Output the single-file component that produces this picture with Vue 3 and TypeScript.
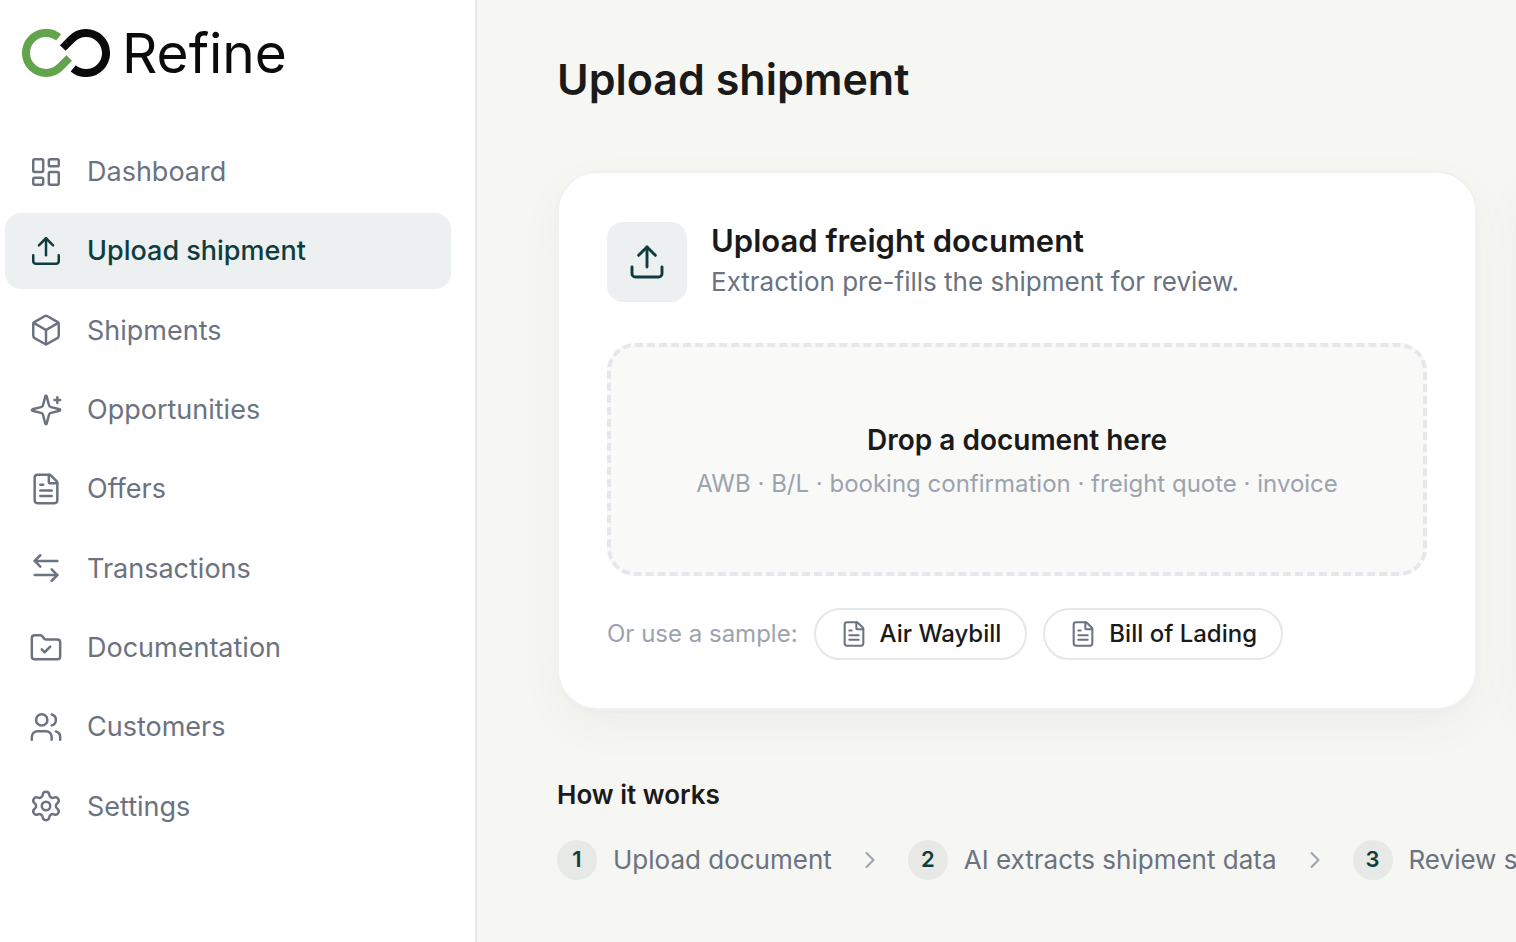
<script setup lang="ts">
import { ref } from 'vue'

interface NavItem {
  label: string
  icon: string[]
}

const UPLOAD = ['M12 3v12', 'm17 8-5-5-5 5', 'M21 15v4a2 2 0 0 1-2 2H5a2 2 0 0 1-2-2v-4']
const FILE = [
  'M6 22a2 2 0 0 1-2-2V4a2 2 0 0 1 2-2h8a2.4 2.4 0 0 1 1.704.706l3.588 3.588A2.4 2.4 0 0 1 20 8v12a2 2 0 0 1-2 2z',
  'M14 2v5a1 1 0 0 0 1 1h5',
  'M10 9H8',
  'M16 13H8',
  'M16 17H8',
]
const CHEVRON = 'm9 18 6-6-6-6'

const navItems: NavItem[] = [
  {
    label: 'Dashboard',
    icon: [
      'M4 3h5a1 1 0 0 1 1 1v7a1 1 0 0 1-1 1H4a1 1 0 0 1-1-1V4a1 1 0 0 1 1-1z',
      'M15 3h5a1 1 0 0 1 1 1v3a1 1 0 0 1-1 1h-5a1 1 0 0 1-1-1V4a1 1 0 0 1 1-1z',
      'M15 12h5a1 1 0 0 1 1 1v7a1 1 0 0 1-1 1h-5a1 1 0 0 1-1-1v-7a1 1 0 0 1 1-1z',
      'M4 16h5a1 1 0 0 1 1 1v3a1 1 0 0 1-1 1H4a1 1 0 0 1-1-1v-3a1 1 0 0 1 1-1z',
    ],
  },
  { label: 'Upload shipment', icon: UPLOAD },
  {
    label: 'Shipments',
    icon: [
      'M21 8a2 2 0 0 0-1-1.73l-7-4a2 2 0 0 0-2 0l-7 4A2 2 0 0 0 3 8v8a2 2 0 0 0 1 1.73l7 4a2 2 0 0 0 2 0l7-4A2 2 0 0 0 21 16Z',
      'm3.3 7 8.7 5 8.7-5',
      'M12 22V12',
    ],
  },
  {
    label: 'Opportunities',
    icon: [
      'M9.937 15.5A2 2 0 0 0 8.5 14.063l-6.135-1.582a.5.5 0 0 1 0-.962L8.5 9.936A2 2 0 0 0 9.937 8.5l1.582-6.135a.5.5 0 0 1 .963 0L14.063 8.5A2 2 0 0 0 15.5 9.937l6.135 1.581a.5.5 0 0 1 0 .964L15.5 14.063a2 2 0 0 0-1.437 1.437l-1.582 6.135a.5.5 0 0 1-.963 0z',
      'M20 3v4',
      'M22 5h-4',
    ],
  },
  { label: 'Offers', icon: FILE },
  {
    label: 'Transactions',
    icon: ['M8 3 4 7l4 4', 'M4 7h16', 'm16 21 4-4-4-4', 'M20 17H4'],
  },
  {
    label: 'Documentation',
    icon: [
      'M20 20a2 2 0 0 0 2-2V8a2 2 0 0 0-2-2h-7.9a2 2 0 0 1-1.69-.9L9.6 3.9A2 2 0 0 0 7.93 3H4a2 2 0 0 0-2 2v13a2 2 0 0 0 2 2Z',
      'm9 13 2 2 4-4',
    ],
  },
  {
    label: 'Customers',
    icon: [
      'M16 21v-2a4 4 0 0 0-4-4H6a4 4 0 0 0-4 4v2',
      'M5 7a4 4 0 1 0 8 0a4 4 0 1 0-8 0',
      'M22 21v-2a4 4 0 0 0-3-3.87',
      'M16 3.128a4 4 0 0 1 0 7.744',
    ],
  },
  {
    label: 'Settings',
    icon: [
      'M9.671 4.136a2.34 2.34 0 0 1 4.659 0 2.34 2.34 0 0 0 3.319 1.915 2.34 2.34 0 0 1 2.33 4.033 2.34 2.34 0 0 0 0 3.831 2.34 2.34 0 0 1-2.33 4.033 2.34 2.34 0 0 0-3.319 1.915 2.34 2.34 0 0 1-4.659 0 2.34 2.34 0 0 0-3.32-1.915 2.34 2.34 0 0 1-2.33-4.033 2.34 2.34 0 0 0 0-3.831A2.34 2.34 0 0 1 6.35 6.051a2.34 2.34 0 0 0 3.319-1.915',
      'M9 12a3 3 0 1 0 6 0a3 3 0 1 0-6 0',
    ],
  },
]

const active = ref('Upload shipment')
const samples: string[] = ['Air Waybill', 'Bill of Lading']
const steps: string[] = ['Upload document', 'AI extracts shipment data', 'Review shipment']
</script>

<template>
  <div class="app">
    <aside class="sidebar">
      <a class="brand" href="#" aria-label="Refine home">
        <svg class="brand-mark" viewBox="22 29 88 48" fill="none" stroke-width="8" aria-hidden="true">
          <path d="M58.6 37.4A20 20 0 1 0 60.1 67.1L69.2 58" stroke="#63a34b" />
          <path d="M62.8 48L71.9 38.9A20 20 0 1 1 73.2 68.4" stroke="#0b0b0b" />
        </svg>
        <span class="brand-name">Refine</span>
      </a>
      <nav class="nav" aria-label="Main">
        <a
          v-for="item in navItems"
          :key="item.label"
          href="#"
          class="nav-item"
          :class="{ active: item.label === active }"
          :aria-current="item.label === active ? 'page' : undefined"
          @click.prevent="active = item.label"
        >
          <svg class="icon nav-icon" viewBox="0 0 24 24" aria-hidden="true">
            <path v-for="d in item.icon" :key="d" :d="d" />
          </svg>
          <span>{{ item.label }}</span>
        </a>
      </nav>
    </aside>

    <main class="main">
      <h1 class="title">Upload shipment</h1>

      <div class="cards">
        <section class="card">
          <header class="card-head">
            <span class="card-badge">
              <svg class="icon badge-icon" viewBox="0 0 24 24" aria-hidden="true">
                <path v-for="d in UPLOAD" :key="d" :d="d" />
              </svg>
            </span>
            <div class="card-text">
              <h2 class="card-title">Upload freight document</h2>
              <p class="card-sub">Extraction pre-fills the shipment for review.</p>
            </div>
          </header>

          <button type="button" class="dropzone">
            <span class="drop-title">Drop a document here</span>
            <span class="drop-sub">AWB · B/L · booking confirmation · freight quote · invoice</span>
          </button>

          <div class="samples">
            <span class="samples-label">Or use a sample:</span>
            <button v-for="sample in samples" :key="sample" type="button" class="chip">
              <svg class="icon chip-icon" viewBox="0 0 24 24" aria-hidden="true">
                <path v-for="d in FILE" :key="d" :d="d" />
              </svg>
              <span class="chip-label">{{ sample }}</span>
            </button>
          </div>
        </section>
        <section class="card" aria-hidden="true"></section>
      </div>

      <section class="how">
        <h2 class="how-title">How it works</h2>
        <ol class="steps">
          <li v-for="(step, i) in steps" :key="step" class="step">
            <svg v-if="i > 0" class="icon step-arrow" viewBox="0 0 24 24" aria-hidden="true">
              <path :d="CHEVRON" />
            </svg>
            <span class="step-number">{{ i + 1 }}</span>
            <span class="step-label">{{ step }}</span>
          </li>
        </ol>
      </section>
    </main>
  </div>
</template>

<style>
body {
  margin: 0;
  overflow: hidden;
}
</style>

<style scoped>
.app {
  display: flex;
  min-height: 100vh;
  background: #f6f6f2;
  color: #1a1a1a;
  font-family: Inter, "Liberation Sans", sans-serif;
}

.icon {
  flex: none;
  fill: none;
  stroke: currentColor;
  stroke-width: 1.75;
  stroke-linecap: round;
  stroke-linejoin: round;
}

h1,
h2,
p,
ol {
  margin: 0;
  padding: 0;
}

.sidebar {
  box-sizing: border-box;
  flex: none;
  width: 477px;
  padding: 20px 24px 0 5px;
  background: #fff;
  border-right: 2px solid #e5e7eb;
}

.brand {
  display: flex;
  align-items: center;
  gap: 12px;
  height: 66px;
  padding-left: 17px;
  color: #0b0b0b;
  text-decoration: none;
}

.brand-mark {
  width: 88px;
  height: 48px;
}

.brand-name {
  font-size: 55px;
  font-weight: 400;
  line-height: 66px;
}

.nav {
  display: grid;
  grid-auto-rows: 1fr;
  gap: 4px;
  height: 710px;
  margin-top: 48px;
}

.nav-item {
  display: flex;
  align-items: center;
  gap: 24px;
  padding: 0 24px;
  border-radius: 16px;
  color: #6b7280;
  font-size: 27px;
  text-decoration: none;
}

.nav-item.active {
  background: #ecf0f1;
  color: #0f3d3e;
  font-weight: 500;
}

.nav-icon {
  width: 34px;
  height: 34px;
}

.main {
  flex: 1;
  min-width: 0;
  padding: 51px 0 0 80px;
  overflow: hidden;
}

.title {
  font-size: 43px;
  font-weight: 600;
  line-height: 56px;
}

.cards {
  display: grid;
  grid-template-columns: repeat(2, calc(100% - 39px));
  gap: 40px;
  margin-top: 64px;
}

.card {
  box-sizing: border-box;
  padding: 48px;
  background: #fff;
  border: 2px solid #f1f1f2;
  border-radius: 40px;
  box-shadow: 0 2px 4px rgba(16, 24, 40, 0.02), 0 16px 48px rgba(16, 24, 40, 0.04);
}

.card-head {
  display: flex;
  align-items: center;
  gap: 24px;
  height: 82px;
}

.card-badge {
  display: grid;
  place-items: center;
  width: 80px;
  height: 80px;
  border-radius: 16px;
  background: #ecf0f1;
  color: #0f3d3e;
}

.badge-icon {
  width: 40px;
  height: 40px;
}

.card-text {
  padding-bottom: 2px;
}

.card-title {
  font-size: 31px;
  font-weight: 600;
  line-height: 42px;
}

.card-sub {
  color: #6b7280;
  font-size: 26px;
  line-height: 40px;
}

.dropzone {
  display: flex;
  flex-direction: column;
  align-items: center;
  justify-content: center;
  box-sizing: border-box;
  width: 100%;
  height: 233px;
  margin-top: 40px;
  padding: 4px 0 0;
  border: 4px dashed #e5e7eb;
  border-radius: 28px;
  background: #f9f9f8;
  font-family: inherit;
}

.drop-title {
  color: #1a1a1a;
  font-size: 28px;
  font-weight: 600;
  line-height: 44px;
}

.drop-sub {
  color: #9ca3af;
  font-size: 24px;
  line-height: 44px;
}

.samples {
  display: flex;
  align-items: center;
  gap: 16px;
  margin-top: 32px;
}

.samples-label {
  padding-bottom: 2px;
  color: #9ca3af;
  font-size: 24px;
}

.chip {
  display: flex;
  align-items: center;
  gap: 12px;
  height: 52px;
  padding: 0 24px;
  border: 2px solid #e5e7eb;
  border-radius: 26px;
  background: #fff;
  color: #1a1a1a;
  font-family: inherit;
  font-size: 24px;
  font-weight: 500;
}

.chip-label {
  padding-bottom: 2px;
}

.chip-icon {
  width: 28px;
  height: 28px;
  color: #6b7280;
}

.how {
  margin-top: 68px;
}

.how-title {
  font-size: 26px;
  font-weight: 600;
  line-height: 34px;
}

.steps {
  display: flex;
  gap: 24px;
  margin-top: 28px;
  list-style: none;
}

.step {
  display: flex;
  flex: none;
  align-items: center;
}

.step-arrow {
  width: 28px;
  height: 28px;
  margin-right: 24px;
  color: #9ca3af;
}

.step-number {
  display: grid;
  place-items: center;
  box-sizing: border-box;
  width: 40px;
  height: 40px;
  margin-right: 16px;
  padding-bottom: 2px;
  border-radius: 50%;
  background: #e6e9e6;
  color: #0f3d3e;
  font-size: 22px;
  font-weight: 600;
}

.step-label {
  padding-bottom: 2px;
  color: #6b7280;
  font-size: 26px;
  white-space: nowrap;
}
</style>
